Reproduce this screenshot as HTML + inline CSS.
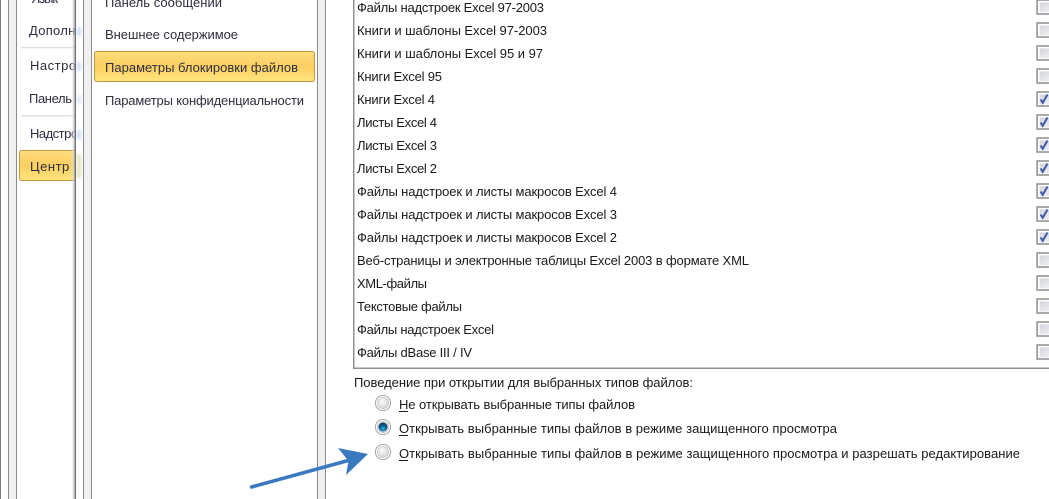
<!DOCTYPE html>
<html><head><meta charset="utf-8"><style>
html,body{margin:0;padding:0;background:#fff;width:1049px;height:499px;overflow:hidden}
svg{display:block}
text{font-family:"Liberation Sans","DejaVu Sans",sans-serif;font-size:13px;fill:#1a1a1a}
.s{fill:#2f2d3e}
</style></head><body>
<svg width="1049" height="499" viewBox="0 0 1049 499" xmlns="http://www.w3.org/2000/svg">
<defs>
<linearGradient id="h" x1="0" y1="0" x2="0" y2="1"><stop offset="0" stop-color="#fddc7e"/><stop offset=".5" stop-color="#fdcf61"/><stop offset="1" stop-color="#ffe67e"/></linearGradient>
<linearGradient id="sh" x1="0" y1="0" x2="1" y2="0"><stop offset="0" stop-color="#eee" stop-opacity="0"/><stop offset=".5" stop-color="#ddd" stop-opacity=".6"/><stop offset="1" stop-color="#8c8c8c" stop-opacity=".8"/></linearGradient>
<linearGradient id="cb" x1="0" y1="0" x2="1" y2="1"><stop offset="0" stop-color="#d3d5db"/><stop offset="1" stop-color="#f8f8fa"/></linearGradient>
<radialGradient id="rd" cx=".4" cy=".35" r=".7"><stop offset="0" stop-color="#fafafa"/><stop offset="1" stop-color="#d4d4d4"/></radialGradient>
<radialGradient id="rb" cx=".5" cy=".7" r=".6"><stop offset="0" stop-color="#2fb4e4"/><stop offset=".6" stop-color="#0c5f94"/><stop offset="1" stop-color="#0a3f63"/></radialGradient>
<filter id="bl" x="-100%" y="-100%" width="300%" height="300%"><feGaussianBlur stdDeviation="1.5"/></filter>
<g id="box"><rect x=".1" y="0" width="20" height="14" fill="#fff" stroke="#949595" stroke-width="1.6"/><rect x="2.6" y="2.4" width="20" height="10" fill="url(#cb)"/></g>
<path id="chk" d="M3.6 7.5 L5.7 10.8 L10.5 2.5" fill="none" stroke="#4059a8" stroke-width="2"/>
<g id="rad"><circle r="7.6" fill="#fff" stroke="#a8a8a8" stroke-width="1"/><circle r="5.6" fill="url(#rd)" stroke="#c6c6c6" stroke-width=".8"/></g>
</defs>
<rect width="1049" height="499" fill="#fff"/>
<rect x="0" y="0" width="1" height="499" fill="#7d7d82"/>
<rect x="8" y="0" width="8" height="499" fill="#f0f0f0"/>
<rect x="8" y="0" width="1" height="499" fill="#8a8a90"/>
<rect x="16" y="0" width="1" height="499" fill="#8a8a90"/>
<rect x="21" y="47" width="56" height="1.3" fill="#dcdce4"/>
<rect x="21" y="115" width="56" height="1.3" fill="#dcdce4"/>
<rect x="19.5" y="150.5" width="60" height="30" rx="2" fill="url(#h)" stroke="#c2983e"/>
<text class="s" x="31" y="3" textLength="27" lengthAdjust="spacing">Язык</text>
<text class="s" x="29" y="35" textLength="60" lengthAdjust="spacing">Дополнит</text>
<text class="s" x="30" y="70" textLength="60" lengthAdjust="spacing">Настройк</text>
<text class="s" x="29" y="103" textLength="43" lengthAdjust="spacing">Панель</text>
<text class="s" x="30" y="138" textLength="60" lengthAdjust="spacing">Надстройк</text>
<text class="s" x="30" y="171" textLength="58" lengthAdjust="spacing">Центр уп</text>
<rect x="71" y="0" width="4" height="499" fill="url(#sh)"/>
<rect x="75" y="0" width="250" height="499" fill="#fff"/>
<g filter="url(#bl)" opacity=".6">
<rect x="77" y="27" width="4" height="9" fill="#a9c4ee"/>
<rect x="77" y="62" width="4" height="9" fill="#a9c4ee"/>
<rect x="77" y="95" width="4" height="9" fill="#c6d6ee"/>
<rect x="77" y="130" width="4" height="9" fill="#a9c4ee"/>
<rect x="77" y="154" width="4" height="24" fill="#cfcf8c"/>
</g>
<rect x="75" y="0" width="1" height="499" fill="#6e6e72"/>
<rect x="83" y="0" width="8" height="499" fill="#f0f0f0"/>
<rect x="83" y="0" width="1" height="499" fill="#8a8a90"/>
<rect x="91" y="0" width="1" height="499" fill="#8a8a90"/>
<rect x="317" y="0" width="8" height="499" fill="#f0f0f0"/>
<rect x="317" y="0" width="1" height="499" fill="#8a8a90"/>
<rect x="325" y="0" width="1" height="499" fill="#8a8a90"/>
<rect x="94.5" y="51.5" width="220" height="30" rx="2" fill="url(#h)" stroke="#c2983e"/>
<text class="s" x="105" y="7" textLength="117" lengthAdjust="spacing">Панель сообщений</text>
<text class="s" x="105" y="39" textLength="133" lengthAdjust="spacing">Внешнее содержимое</text>
<text class="s" x="105" y="72" textLength="193" lengthAdjust="spacing">Параметры блокировки файлов</text>
<text class="s" x="105" y="105" textLength="199" lengthAdjust="spacing">Параметры конфиденциальности</text>
<rect x="353" y="0" width="1.5" height="369" fill="#8f9090"/>
<rect x="353" y="367.5" width="696" height="1.5" fill="#8f9090"/>
<text x="357" y="12" textLength="187" lengthAdjust="spacing">Файлы надстроек Excel 97-2003</text>
<text x="357" y="35" textLength="190" lengthAdjust="spacing">Книги и шаблоны Excel 97-2003</text>
<text x="357" y="58" textLength="186" lengthAdjust="spacing">Книги и шаблоны Excel 95 и 97</text>
<text x="357" y="81" textLength="85" lengthAdjust="spacing">Книги Excel 95</text>
<text x="357" y="104" textLength="78" lengthAdjust="spacing">Книги Excel 4</text>
<text x="357" y="127" textLength="80" lengthAdjust="spacing">Листы Excel 4</text>
<text x="357" y="150" textLength="80" lengthAdjust="spacing">Листы Excel 3</text>
<text x="357" y="173" textLength="80" lengthAdjust="spacing">Листы Excel 2</text>
<text x="357" y="196" textLength="260" lengthAdjust="spacing">Файлы надстроек и листы макросов Excel 4</text>
<text x="357" y="219" textLength="260" lengthAdjust="spacing">Файлы надстроек и листы макросов Excel 3</text>
<text x="357" y="242" textLength="260" lengthAdjust="spacing">Файлы надстроек и листы макросов Excel 2</text>
<text x="357" y="265" textLength="392" lengthAdjust="spacing">Веб-страницы и электронные таблицы Excel 2003 в формате XML</text>
<text x="357" y="288" textLength="70" lengthAdjust="spacing">XML-файлы</text>
<text x="357" y="311" textLength="105" lengthAdjust="spacing">Текстовые файлы</text>
<text x="357" y="334" textLength="137" lengthAdjust="spacing">Файлы надстроек Excel</text>
<text x="357" y="357" textLength="115" lengthAdjust="spacing">Файлы dBase III / IV</text>
<use href="#box" x="1037" y="0"/><use href="#box" x="1037" y="23"/><use href="#box" x="1037" y="46"/><use href="#box" x="1037" y="69"/>
<use href="#box" x="1037" y="92"/><use href="#chk" x="1037" y="92"/>
<use href="#box" x="1037" y="115"/><use href="#chk" x="1037" y="115"/>
<use href="#box" x="1037" y="138"/><use href="#chk" x="1037" y="138"/>
<use href="#box" x="1037" y="161"/><use href="#chk" x="1037" y="161"/>
<use href="#box" x="1037" y="184"/><use href="#chk" x="1037" y="184"/>
<use href="#box" x="1037" y="207"/><use href="#chk" x="1037" y="207"/>
<use href="#box" x="1037" y="230"/><use href="#chk" x="1037" y="230"/>
<use href="#box" x="1037" y="253"/><use href="#box" x="1037" y="276"/><use href="#box" x="1037" y="299"/><use href="#box" x="1037" y="322"/><use href="#box" x="1037" y="345"/>
<text x="354" y="387" textLength="339" lengthAdjust="spacing">Поведение при открытии для выбранных типов файлов:</text>
<use href="#rad" x="383" y="403"/>
<use href="#rad" x="383" y="427"/><circle cx="383" cy="427" r="4.5" fill="url(#rb)"/>
<use href="#rad" x="383" y="452"/>
<text x="399" y="409" textLength="236" lengthAdjust="spacing">Не открывать выбранные типы файлов</text>
<text x="399" y="433" textLength="438" lengthAdjust="spacing">Открывать выбранные типы файлов в режиме защищенного просмотра</text>
<text x="399" y="458" textLength="621" lengthAdjust="spacing">Открывать выбранные типы файлов в режиме защищенного просмотра и разрешать редактирование</text>
<rect x="399" y="411" width="9" height="1" fill="#1a1a1a"/>
<rect x="399" y="435" width="9" height="1" fill="#1a1a1a"/>
<rect x="399" y="460" width="9" height="1" fill="#1a1a1a"/>
<path d="M251.5 487 L350 460" stroke="#3a78bf" stroke-width="3.6" stroke-linecap="round" fill="none"/>
<path d="M338 448 L368 454 L346 475 L348.5 461 Z" fill="#3a78bf"/>
</svg>
</body></html>
